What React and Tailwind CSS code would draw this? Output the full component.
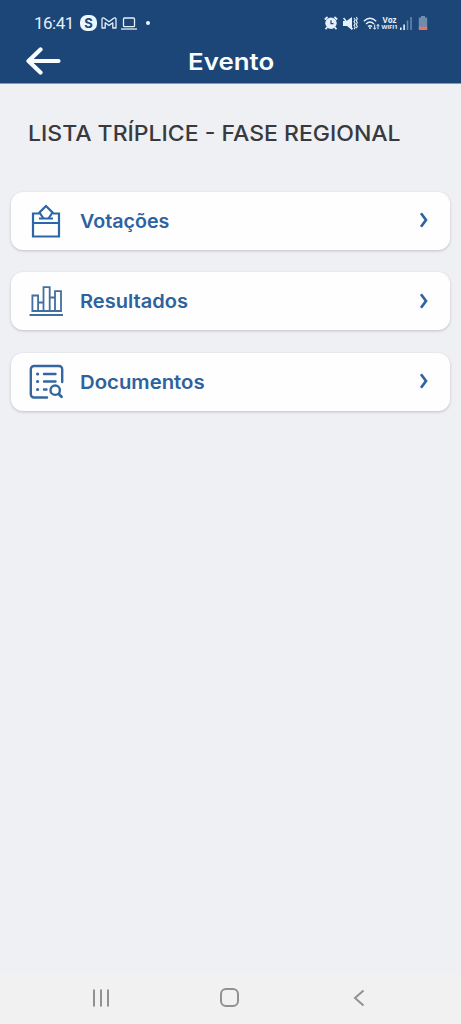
import React from "react";

function StatusBar() {
  return (
    <div className="flex h-[46px] items-center pl-[34px] pr-[33px] text-[#e4f0fa]">
      <span className="w-[41px] pt-px font-[Roboto,sans-serif] text-[17px] leading-none tracking-[-0.5px]">16:41</span>
      <div className="ml-[5px] flex h-4 w-[17px] items-center justify-center rounded-[7px] bg-[#edf7ff] text-[13px] font-bold leading-none text-[#1c4678]">
        S
      </div>
      <svg className="ml-1 h-[12px] w-4" viewBox="0 0 16 12" fill="none" stroke="currentColor" strokeWidth="1.3" strokeLinejoin="round">
        <path d="M1 11V2.2C1 .8 2.4.5 3.3 1.2L8 4.8l4.7-3.6c.9-.7 2.3-.4 2.3 1V11h-3.2V5.8L8 8.6 4.2 5.8V11z" />
      </svg>
      <svg className="ml-1 h-[13px] w-4" viewBox="0 0 16 13" fill="none" stroke="currentColor" strokeWidth="1.3">
        <rect x="2.5" y="1" width="11" height="8.7" rx="1" />
        <path d="M0 12h16" />
      </svg>
      <span className="ml-[9px] h-1 w-1 rounded-full bg-[#edf7ff]" />

      <svg className="ml-auto h-[14px] w-[14px]" viewBox="0 0 14 14" fill="none">
        <circle cx="7" cy="7.3" r="5.7" fill="currentColor" />
        <path d="M.8 3.5 3.6 1M13.2 3.5 10.4 1M3.2 11.3l-1.7 2M10.8 11.3l1.7 2" stroke="currentColor" strokeWidth="1.7" />
        <path d="M7 4.2v3.5h2.5" stroke="#1c4678" strokeWidth="1.2" />
      </svg>
      <svg className="ml-[5px] h-[15px] w-[15px]" viewBox="0 0 15 15" fill="none">
        <path d="M0 5h3.500L9 1v13L4 10H0z" fill="currentColor" />
        <path d="m.5 2 9 11.200" stroke="currentColor" strokeWidth="1.5" />
        <path d="m11 2 1.200 1.800L11 5.700l1.200 1.900L11 9.500l1.200 1.800-1.200 1.900M13.300 1l1 1.800-1 1.900 1 1.900-1 1.900 1 1.800-1 1.900" stroke="currentColor" strokeWidth="1.1" />
      </svg>
      <svg className="ml-[5px] h-[13px] w-[17px]" viewBox="0 0 17 13" fill="none" stroke="currentColor">
        <path d="M.8 4.2Q7 -1.6 13.2 4.2M3 7q4-3.8 8 0M5 9.6q2-1.8 4 0" strokeWidth="1.4" />
        <circle cx="7" cy="11" r="1" fill="currentColor" stroke="none" />
        <path d="M11.7 7.5v4.7m-1.4-1.5 1.4 1.5 1.2-1.5M15 12.2V7.5m-1.3 1.6L15 7.5l1.3 1.6" strokeWidth="1" />
      </svg>
      <div className="ml-[1px] flex w-[17px] flex-col items-center font-['Open_Sans',sans-serif] font-bold leading-none">
        <span className="text-[8px] leading-[8px]">Voz</span>
        <span className="text-[6px] leading-[7px] tracking-[-0.1px]">WIFI1</span>
      </div>
      <svg className="ml-[2px] h-[13px] w-3" viewBox="0 0 12 13" fill="currentColor">
        <path d="M0 10.5h1.6V13H0zM3.3 7.5h1.6V13H3.3z" />
        <path d="M6.8 3.5h1.5V13H6.8zM10.3 0h1.5v13h-1.5z" opacity=".4" />
      </svg>
      <svg className="ml-[6px] h-[14px] w-[10px]" viewBox="0 0 10 14">
        <path d="M3 0h4v1.6h1.2c.6 0 1 .4 1 1V13c0 .6-.4 1-1 1H1.8c-.6 0-1-.4-1-1V2.6c0-.6.4-1 1-1H3z" fill="#6f8bae" />
        <path d="M.8 10.7h8.400V13c0 .6-.4 1-1 1H1.800c-.6 0-1-.4-1-1z" fill="#e7755f" />
      </svg>
    </div>
  );
}

function Header() {
  return (
    <header className="h-[84px] border-b border-[#8197b5] bg-[#1c4678]">
      <StatusBar />
      <div className="grid h-[32px] grid-cols-[1fr_auto_1fr] items-center pl-[26px]">
        <svg className="-mt-[2px] h-7 w-[35px]" viewBox="0 0 35 28" fill="none" stroke="#fafdff" strokeWidth="4.2" strokeLinecap="round" strokeLinejoin="round">
          <path d="M32.5 14H3M14.5 2.5 2.5 14l12 11.500" />
        </svg>
        <h1 className="mr-[25px] scale-x-110 text-[23.5px] font-semibold leading-8 text-[#fafdff]">Evento</h1>
      </div>
    </header>
  );
}

function BallotIcon() {
  return (
    <svg className="-mt-[2px] h-[36px] w-[36px]" viewBox="0 0 36 36" fill="none" stroke="#2c66a8" strokeWidth="2.2">
      <path d="M11.5 11.5H5v23h26v-23h-6M5 21h26M11 16.5h14" />
      <path d="M15.500 16.5 11.5 10.500 18 4l6.500 6.500-4 6" />
    </svg>
  );
}

function ChartIcon() {
  return (
    <svg className="-mt-[2px] h-[36px] w-[36px]" viewBox="0 0 36 36" fill="none" stroke="#416f9f" strokeWidth="1.8">
      <path d="M4.4 29V13.5h5.7V29zM15.5 29V5.2h6.2V29zM27 29V9.2h6V29zM10.1 20.5h5.4M21.7 15.5H27M10.1 29h5.4M21.7 29H27" />
      <path d="M1.5 33H35" strokeWidth="1.9" />
    </svg>
  );
}

function DocumentIcon() {
  return (
    <svg className="h-[36px] w-[36px]" viewBox="0 0 36 36" fill="none" stroke="#3466a0" strokeWidth="2.4" strokeLinecap="round">
      <path d="M19 33.5H6A3.2 3.2 0 0 1 2.8 30.3V5.2A3.2 3.2 0 0 1 6 2h25a3.2 3.2 0 0 1 3.200 3.200V18" />
      <path d="M16 10h11.500M16 17.500h11.500M16 25.500h2.500" />
      <path d="M9.500 10h.2M9.500 17.500h.2M9.500 25.500h.2" strokeWidth="3" />
      <circle cx="27.2" cy="26.2" r="4.7" />
      <path d="m30.800 30 2.700 2.700" strokeWidth="2.8" />
    </svg>
  );
}

const items = [
  { label: "Votações", icon: BallotIcon, stretch: "scale-x-[1.035]" },
  { label: "Resultados", icon: ChartIcon, stretch: "scale-x-[1.055]" },
  { label: "Documentos", icon: DocumentIcon, stretch: "scale-x-[1.07]" },
];

function MenuCard({ label, icon: Icon, stretch }) {
  return (
    <button className="flex h-[58px] w-full items-center rounded-[12px] bg-[#fefefe] pl-[17px] pr-[21px] shadow-[0_1px_3px_rgba(0,0,0,0.2)]">
      <Icon />
      <span className={`ml-4 origin-left pt-[2px] text-[19px] font-semibold leading-6 text-[#2e629e] ${stretch}`}>{label}</span>
      <svg className="-mt-px ml-auto h-4 w-[10px]" viewBox="0 0 10 16" fill="none" stroke="#2f659f" strokeWidth="2.7">
        <path d="m2 1.3 5 6.700-5 6.700" />
      </svg>
    </button>
  );
}

function NavigationBar() {
  return (
    <nav className="flex h-[50px] items-center bg-[#f1f1f1] pb-[3px]">
      <svg className="ml-[91.5px] h-[18px] w-[18px]" viewBox="0 0 18 18" stroke="#919191" strokeWidth="2">
        <path d="M2 .5v17M9 .5v17M16 .5v17" />
      </svg>
      <div className="ml-[110.5px] h-[19px] w-[19px] rounded-[6px] border-2 border-[#919191]" />
      <svg className="ml-[114px] h-[18px] w-[12px]" viewBox="0 0 12 18" fill="none" stroke="#919191" strokeWidth="2">
        <path d="M10.5 1.5 2 9l8.500 7.500" />
      </svg>
    </nav>
  );
}

export default function App() {
  return (
    <div className="flex h-screen w-full flex-col overflow-hidden bg-[#eef0f4] font-[Inter,sans-serif]">
      <Header />
      <main className="flex-1 px-[11px]">
        <h2 className="ml-[17px] mt-[35px] w-max origin-left scale-x-[1.07] whitespace-nowrap text-[21.5px] font-medium leading-7 text-[#393a3d]">
          LISTA TRÍPLICE - FASE REGIONAL
        </h2>
        <div className="mt-[44.5px] flex flex-col gap-[22.5px]">
          {items.map((item) => (
            <MenuCard key={item.label} {...item} />
          ))}
        </div>
      </main>
      <NavigationBar />
    </div>
  );
}
